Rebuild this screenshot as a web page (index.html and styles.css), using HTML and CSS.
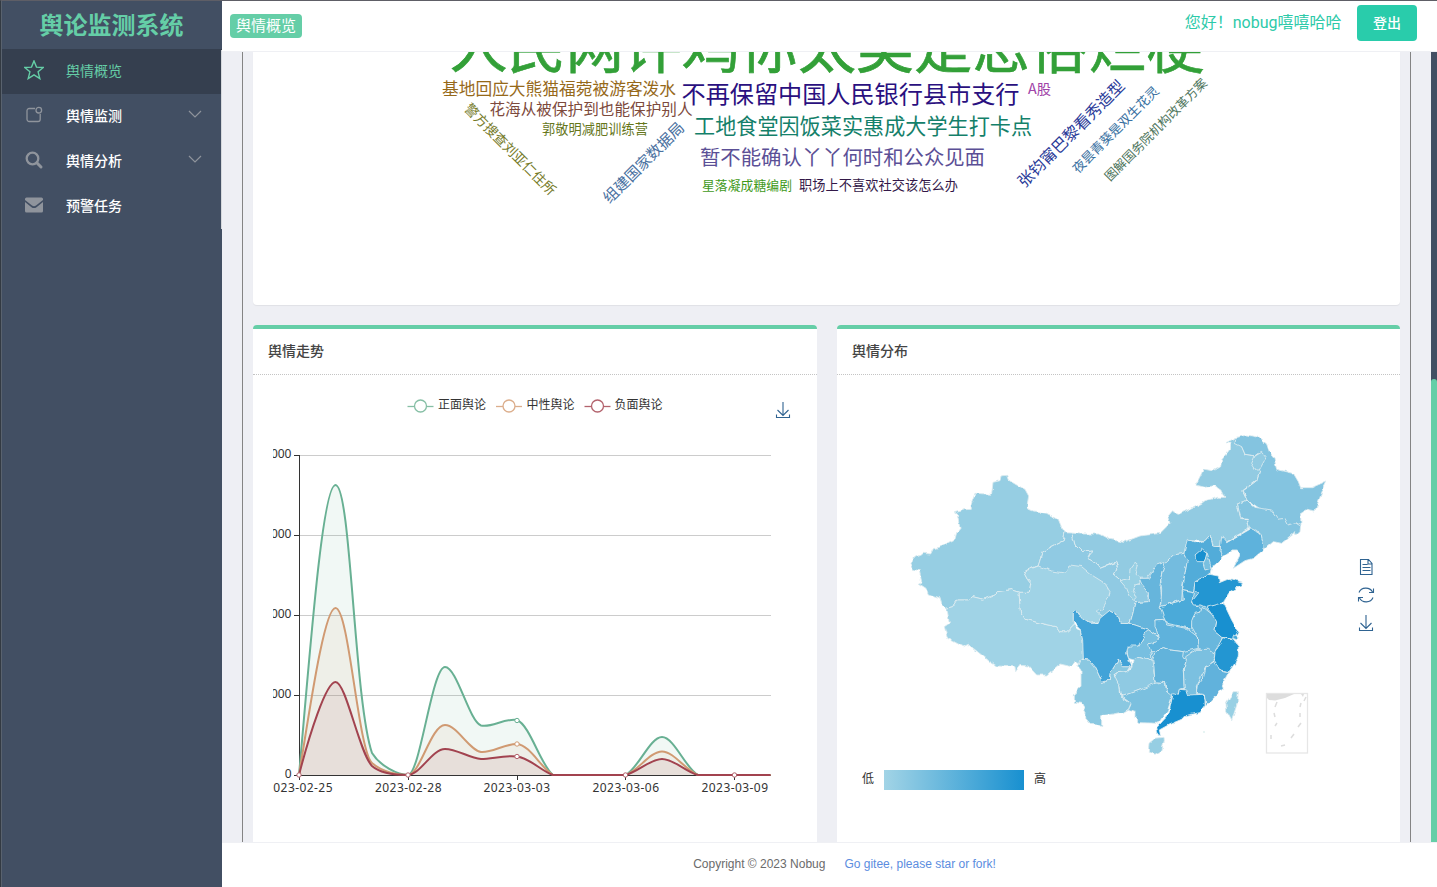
FILE: index.html
```html
<!DOCTYPE html>
<html lang="zh-CN">
<head>
<meta charset="utf-8">
<title>舆论监测系统</title>
<link rel="stylesheet" href="styles.css">
</head>
<body>
<div class="app">
  <aside class="sidebar">
    <h1 class="brand">舆论监测系统</h1>
    <nav class="menu">
      <a class="item active">
        <svg class="icon" viewBox="0 0 20 20"><path d="M10 .9l2.500 6.200 6.800.4-5.200 4.300 1.700 6.800L10 14.900l-5.800 3.700 1.700-6.800L.7 7.500l6.800-.4z" fill="none" stroke="currentColor" stroke-width="1.400"/></svg>
        <span>舆情概览</span></a>
      <a class="item">
        <svg class="icon" viewBox="0 0 20 20"><path d="M11 3.500H5.200A2.200 2.200 0 0 0 3 5.700v8.600A2.200 2.200 0 0 0 5.200 16.500H14a2.200 2.200 0 0 0 2.200-2.200V9" fill="none" stroke="currentColor" stroke-width="1.300"/><circle cx="14.800" cy="5.200" r="2.800" fill="none" stroke="currentColor" stroke-width="1.300"/></svg>
        <span>舆情监测</span>
        <svg class="arrow" viewBox="0 0 14 8"><path d="M1 1l6 6 6-6" fill="none" stroke="currentColor" stroke-width="1.200"/></svg></a>
      <a class="item">
        <svg class="icon" viewBox="0 0 20 20"><circle cx="8.500" cy="8.500" r="5.800" fill="none" stroke="currentColor" stroke-width="2.300"/><path d="M12.800 12.800l4.200 4.200" stroke="currentColor" stroke-width="3" stroke-linecap="round"/></svg>
        <span>舆情分析</span>
        <svg class="arrow" viewBox="0 0 14 8"><path d="M1 1l6 6 6-6" fill="none" stroke="currentColor" stroke-width="1.200"/></svg></a>
      <a class="item">
        <svg class="icon" viewBox="0 0 20 20"><path d="M1 4a1.500 1.500 0 0 1 1.500-1.500h15A1.500 1.500 0 0 1 19 4v1L12 10.600q-2 1.500-4 0L1 5z" fill="currentColor"/><path d="M1 7l6.500 5.200q2.500 1.800 5 0L19 7v9a1.500 1.500 0 0 1-1.500 1.500h-15A1.500 1.500 0 0 1 1 16z" fill="currentColor"/></svg>
        <span>预警任务</span></a>
    </nav>
    <div class="side-thumb"></div>
  </aside>

  <div class="page">
    <header class="topbar">
      <span class="tag">舆情概览</span>
      <span class="hello">您好！nobug嘻嘻哈哈</span>
      <button class="logout">登出</button>
    </header>

    <div class="viewport">
      <main class="content">
        <section class="card cloud">
          <svg class="cloud-svg" viewBox="253 52 1147 253">
            <text x="449.500" y="68" font-size="58" textLength="755" fill="#33a038" stroke="#33a038" stroke-width=".7">人民网评鸡你太美是恶俗烂梗</text>
            <text x="442" y="95" font-size="16.700" textLength="234" fill="#96691a">基地回应大熊猫福菀被游客泼水</text>
            <text x="681.500" y="102.500" font-size="24.200" textLength="338" fill="#2a1080">不再保留中国人民银行县市支行</text>
            <text x="1028" y="94" font-size="14" textLength="23" lengthAdjust="spacingAndGlyphs" fill="#a043a8">A股</text>
            <text x="489.500" y="115" font-size="15.600" textLength="203" fill="#7d4a3c">花海从被保护到也能保护别人</text>
            <text x="542" y="134" font-size="13.200" textLength="106" fill="#66761a">郭敬明减肥训练营</text>
            <text x="694" y="133.500" font-size="21.100" textLength="338" fill="#14806a">工地食堂因饭菜实惠成大学生打卡点</text>
            <text x="700" y="165" font-size="20.400" textLength="285" fill="#5b4f96">暂不能确认丫丫何时和公众见面</text>
            <text x="702" y="190" font-size="12.800" textLength="90" fill="#3f9a1a">星落凝成糖编剧</text>
            <text x="799" y="190" font-size="13.200" textLength="159" fill="#331848">职场上不喜欢社交该怎么办</text>
            <g class="tilted">
              <text transform="translate(511 148.500) rotate(45)" font-size="13.600" fill="#757a28">警方搜查刘亚仁住所</text>
              <text transform="translate(642.500 161.500) rotate(-45)" font-size="15.300" fill="#4a719f">组建国家数据局</text>
              <text transform="translate(1070.500 133) rotate(-45)" font-size="15.900" fill="#2a3a98">张钧甯巴黎看秀造型</text>
              <text transform="translate(1115 129) rotate(-45)" font-size="12.900" fill="#376f9f">夜昙青葵是双生花灵</text>
              <text transform="translate(1155 129) rotate(-45)" font-size="12.600" fill="#4f765d">图解国务院机构改革方案</text>
            </g>
          </svg>
        </section>

        <div class="row">
          <section class="card panel">
            <h2 class="panel-title">舆情走势</h2>
            <svg class="chart" viewBox="253 375 564 467">
              <defs><clipPath id="plot"><rect x="273" y="375" width="544" height="467"/></clipPath></defs>
              <g fill="#fff" stroke-width="1.300">
                <g stroke="#86bfa5"><path d="M407.500 406.500h26"/><circle cx="420.500" cy="406" r="6"/></g>
                <g stroke="#dcae8c"><path d="M496 406.500h26"/><circle cx="509" cy="406" r="6"/></g>
                <g stroke="#b3636d"><path d="M584.500 406.500h26"/><circle cx="597.500" cy="406" r="6"/></g>
              </g>
              <g class="label">
                <text x="438" y="409">正面舆论</text><text x="526.500" y="409">中性舆论</text><text x="614.500" y="409">负面舆论</text>
              </g>
              <path class="tool" d="M783 402v13M777.500 410l5.500 5.500 5.500-5.500M776.500 414.500v3h13v-3"/>
              <path d="M300 455.500h471M300 535.500h471M300 615.500h471M300 695.500h471" stroke="#ccc"/>
              <path d="M299.500 455v325M294 455.500h5M294 535.500h5M294 615.500h5M294 695.500h5M294 775.500h477M408.500 775v5M517.500 775v5M625.500 775v5M734.500 775v5" stroke="#333" fill="none"/>
              <g class="label" clip-path="url(#plot)">
                <g text-anchor="end"><text x="291.500" y="458">4000</text><text x="291.500" y="538">3000</text><text x="291.500" y="618">2000</text><text x="291.500" y="698">1000</text><text x="291.500" y="778">0</text></g>
                <g class="dates"><text x="266" y="792" textLength="66.500">2023-02-25</text><text x="375" y="792" textLength="66.500">2023-02-28</text><text x="483.500" y="792" textLength="66.500">2023-03-03</text><text x="592.500" y="792" textLength="66.500">2023-03-06</text><text x="701.500" y="792" textLength="66.500">2023-03-09</text></g>
              </g>
              <g class="series">
                <path fill="#68b093" stroke="#68b093" d="M299 775C309 665 322 485 335.500 485C351 485 354 700 372 753C380 766 398 775 408 775C420 775 432 667 445 667C457 667 469 721 481 725.500C492 728 504 718 517 720C530 725 541 766 553 775H625.500C638 769 650 737 662 737C674 737 686 769 698 775H770.500"/>
                <path fill="#d09a72" stroke="#d09a72" d="M299 775C309 715 324 608 335.500 608C349 608 358 750 372 763C382 772 398 775 408 775C420 775 431 725 445 725C457 725 469 750 481 752C492 753 504 744 517 744C530 745 541 768 553 775H625.500C638 771 650 751.500 662 751.500C674 751.500 686 771 698 775H770.500"/>
                <path fill="#a2434f" stroke="#a2434f" d="M299 775C309 736 326 682 335.500 682C346 682 359 752 372 766C381 774 398 775 408 775C420 775 432 749 445 749C457 749 469 758 481 759C492 759 504 755 517 756.500C530 758 541 771 553 775H625.500C638 772 650 759 662 759C674 759 686 772 698 775H770.500"/>
              </g>
              <g fill="#fff" stroke="#b3636d">
                <circle cx="299" cy="775" r="2.200"/><circle cx="408" cy="775" r="2.200"/><circle cx="625.500" cy="775" r="2.200"/><circle cx="734.500" cy="775" r="2.200"/><circle cx="517" cy="756.500" r="2.200"/>
                <circle cx="517" cy="744" r="2.200" stroke="#d09a72"/><circle cx="517" cy="720.500" r="2.200" stroke="#68b093"/>
              </g>
            </svg>
          </section>

          <section class="card panel">
            <h2 class="panel-title">舆情分布</h2>
            <svg class="chart" viewBox="837 375 563 467">
              <defs>
                <linearGradient id="scale"><stop offset="0" stop-color="#a2d4e6"/><stop offset="1" stop-color="#1890d0"/></linearGradient>
                <filter id="rough" filterUnits="userSpaceOnUse" x="0" y="0" width="1320" height="1060" color-interpolation-filters="sRGB"><feTurbulence type="fractalNoise" baseFrequency=".06" numOctaves="1" seed="4"/><feDisplacementMap in="SourceGraphic" scale="14" xChannelSelector="R" yChannelSelector="G"/></filter>
              </defs>
              <g class="map" transform="translate(900 420) scale(.33333)" filter="url(#rough)">
                <path fill="#6db9de" d="M720 440L790 425 870 380 930 380 930 560 960 680 900 800 760 800 700 690 690 560z"/>
                <path fill="#96cee3" d="M303 168L320 166 325 180 350 195 375 208 386 228 380 265 400 273 440 280 475 298 484 320 495 338 490 362 455 380 427 397 415 437 370 455 382 478 392 490 388 517 357 517 332 509 295 515 285 525 250 538 218 530 205 540 170 540 158 560 140 565 128 555 124 535 85 522 78 505 55 490 65 485 58 452 40 448 33 430 45 412 72 400 92 402 100 386 118 382 165 357 170 338 180 325 172 285 163 278 195 269 214 268 213 255 225 220 275 223 279 187 300 182z"/>
                <path fill="#92cbe2" d="M515 339L540 342 600 342 630 358 670 367 720 348 780 340 810 310 803 290 815 275 835 283 870 267 905 250 915 242 955 232 975 232 960 208 945 197 915 202 887 195 905 160 910 147 940 153 962 140 965 120 988 90 990 70 978 68 1008 53 1025 80 1035 103 1065 107 1080 150 1070 180 1028 212 1042 240 1012 252 1022 293 1042 300 1048 325 1005 350 965 375 938 378 930 345 915 362 865 358 852 400 820 405 795 430 765 440 740 475 720 475 690 478 660 482 640 465 655 440 650 427 635 430 600 445 590 430 562 415 575 390 545 395 525 375z"/>
                <path fill="#90cae3" d="M495 338L515 339 525 375 545 395 575 390 562 415 590 430 600 445 635 432 650 427 655 440 640 465 660 482 690 490 735 495 745 515 745 545 705 548 700 575 690 608 660 608 655 590 628 572 605 600 580 600 415 437 427 397 455 380 490 362z"/>
                <path fill="#98d0e4" d="M705 430L690 450 688 475 660 482 680 505 690 530 702 542 712 532 700 515 705 495 720 490 718 470 705 460 712 435z"/>
                <path fill="#a0d3e6" d="M140 565L158 560 170 540 205 540 218 530 250 538 285 525 295 515 332 509 357 517 362 580 378 598 430 612 470 620 480 635 500 635 520 615 540 630 550 660 551 712 540 735 525 725 515 740 480 732 440 765 410 765 385 738 360 736 347 755 345 740 290 738 270 725 205 673 190 680 143 655 133 620 148 610z"/>
                <path fill="#a0d3e6" d="M415 438L370 455 382 478 392 490 388 517 357 517 362 580 378 598 430 612 470 620 480 635 500 635 520 615 520 578 530 572 545 595 570 610 600 605 612 592 590 575 605 570 625 535 630 515 615 490 575 465 545 440 510 435 500 460 455 453z"/>
                <path fill="#66b5dc" d="M800 425L785 460 780 495 785 530 780 557 795 598 765 600 775 650 743 628 690 610 700 575 705 548 745 545 745 515 725 492 718 475 745 475 770 435z"/>
                <path fill="#74bcdf" d="M795 428L820 405 852 400 864 422 852 470 847 510 845 540 782 560 785 510 782 475z"/>
                <path fill="#52acd9" d="M862 355L890 368 915 362 930 345 938 375 960 380 970 410 945 435 935 440 930 463 885 490 880 518 847 512 862 420 852 400z"/>
                <path fill="#5eb2dc" d="M965 350L980 368 1060 322 1085 345 1093 388 1060 415 1035 422 1000 445 1020 405 1015 390 1000 390 970 410 960 390z"/>
                <path fill="#84c4e0" d="M1008 53L1040 45 1075 52 1100 72 1108 95 1120 110 1130 148 1180 160 1195 185 1202 203 1235 203 1280 183 1270 205 1245 273 1220 268 1202 280 1203 320 1165 325 1042 240 1030 212 1070 182 1080 150 1060 130 1075 100 1065 107 1035 103 1025 80 1005 70z"/>
                <path fill="#92cbe2" d="M1065 108L1085 97 1098 113 1078 150 1068 150 1055 130z"/>
                <path fill="#84c4e0" d="M1012 252L1040 240 1065 262 1115 270 1135 298 1155 295 1165 315 1185 308 1202 318 1200 335 1190 345 1185 335 1145 370 1120 365 1093 388 1083 340 1048 325 1042 295 1022 293z"/>
                <path fill="#4baad9" d="M780 560L850 540 847 512 880 518 875 548 895 560 905 570 880 590 875 625 800 610 790 590z"/>
                <path fill="#5fb2dc" d="M765 600L790 598 800 615 860 625 892 650 895 685 850 695 810 690 790 683 765 695 745 695 745 675 775 655 770 630 765 620z"/>
                <path fill="#69b7dd" d="M910 562L920 570 945 590 950 605 945 635 967 652 960 675 940 698 910 690 895 685 892 650 875 620 875 602 885 580 905 575z"/>
                <path fill="#1890d0" d="M920 562L960 548 975 558 995 600 1015 635 1010 645 1000 658 965 652 945 635 950 605 930 575z"/>
                <path fill="#2396d2" d="M930 463L955 468 958 488 990 475 1028 487 1023 495 990 515 965 550 920 562 905 555 880 555 875 545 895 520 882 510 885 485z"/>
                <path fill="#1890d0" d="M905 388L920 400 915 425 895 425 885 405z"/>
                <path fill="#79c0e0" d="M922 403L930 430 933 445 915 450 910 430z"/>
                <path fill="#78bfe0" d="M743 628L775 650 772 665 745 672 755 705 755 720 735 715 720 710 700 720 685 715 680 690 690 675 715 678z"/>
                <path fill="#8ac8e1" d="M540 720L568 720 585 740 607 787 628 780 630 760 655 720 670 740 690 740 680 755 645 760 660 800 662 830 693 850 690 865 670 877 640 882 605 887 605 920 590 912 570 910 557 895 558 875 545 850 523 847 523 825 543 795 543 750 533 738z"/>
                <path fill="#42a3d8" d="M520 578L530 572 545 595 570 610 595 610 600 595 628 572 655 588 660 608 690 610 743 628 715 678 685 678 680 700 695 740 670 740 655 720 630 760 628 780 607 787 585 740 568 720 550 718 548 660 540 625 520 605z"/>
                <path fill="#8fcae3" d="M720 710L755 720 763 765 765 790 745 805 720 810 690 822 665 830 660 800 645 770 650 758 680 755 695 740 700 720z"/>
                <path fill="#7bc0df" d="M665 830L720 810 765 790 795 785 800 815 820 820 803 870 775 910 720 908 705 895 705 875 685 868 693 850z"/>
                <path fill="#62b3db" d="M765 695L790 683 810 690 850 695 848 710 858 725 850 750 853 805 838 808 835 823 815 825 802 815 798 788 765 785 762 740 758 720z"/>
                <path fill="#7bc0e0" d="M857 710L890 688 925 688 945 700 942 720 918 740 905 765 892 800 895 830 865 830 853 805 850 750 858 725z"/>
                <path fill="#61b2dc" d="M945 723L960 750 987 755 965 795 970 805 918 858 913 825 892 820 895 795 910 775 918 740z"/>
                <path fill="#2396d2" d="M968 653L1000 660 1015 680 1015 705 1005 730 987 755 960 750 942 723 945 695z"/>
                <path fill="#48a8d8" d="M1000 645L1017 655 1010 662 998 658z"/>
                <path fill="#1890d0" d="M820 818L835 823 838 808 860 810 865 825 910 823 915 840 915 858 900 878 855 887 845 898 805 915 778 930 782 947 770 942 768 925 805 885z"/>
                <path fill="#96cee3" d="M792 952L765 955 747 970 745 995 765 1003 785 992 793 965z"/>
                <path fill="#98d0e4" d="M1000 815L1015 815 1012 850 995 902 980 875 978 850z"/>
              </g>
              <g fill="none" stroke="#e6e6e6">
                <rect x="1266.500" y="693.500" width="41" height="59.500" stroke-width="1.300"/>
                <path fill="#ddd" stroke="none" d="M1267 694h27l-9 4-10 2.500-6-.5-2-2zM1301 694h3l-1 3z"/>
                <path stroke="#ddd" stroke-width="1.500" d="M1277 702l-2 5M1274 713l1 4M1277 723l-2 3M1271 735v4M1281 746l4-1M1291 738l3-4M1298 727l3-4M1300 713v4M1301 703l-1 4M1306 697l-2 4"/>
              </g>
              <circle cx="1204" cy="732" r=".8" fill="#c9e5e4"/>
              <g class="tool">
                <path d="M1360.500 559.500h8l3.500 4v11h-11.500zM1368 559.500v4.500h4M1362.500 564.500h5M1362.500 567.500h8M1362.500 570.500h8"/>
                <path d="M1359 592.500a7.300 6.600 0 0 1 13.500-.5M1373 597.500a7.300 6.600 0 0 1-13.500.5M1373.500 588.500v4h-4.500M1358.500 601.500v-4h4.500"/>
                <path d="M1366 615v13M1360.500 623l5.500 5.500 5.500-5.500M1359.500 627.500v3h13v-3"/>
              </g>
              <rect x="884" y="770" width="140" height="20" fill="url(#scale)"/>
              <g class="label"><text x="862" y="783">低</text><text x="1034" y="783">高</text></g>
            </svg>
          </section>
        </div>
      </main>
      <div class="scrollbar"><div class="thumb"></div></div>
    </div>

    <footer class="footer"><span>Copyright © 2023 Nobug</span><a>Go gitee, please star or fork!</a></footer>
  </div>
</div>
</body>
</html>
```
FILE: styles.css
```css
* { box-sizing: border-box; }
body {
  margin: 0;
  font-family: "Noto Sans", "Noto Sans CJK SC", sans-serif;
  background: #fff;
  overflow: hidden;
}
.app {
  display: flex;
  width: 1437px;
  height: 887px;
  border-top: 1px solid #5e5e66;
  border-left: 1px solid #333a42;
}
.sidebar {
  position: relative;
  width: 221px;
  flex: none;
  background: #424f63;
  border-left: 1px solid #59626e;
}
.brand {
  margin: 0;
  height: 48px;
  padding-right: 1px;
  font: 700 24px/45px "Noto Sans CJK SC", sans-serif;
  text-align: center;
  color: #65cea7;
}
.item {
  display: flex;
  align-items: center;
  height: 45px;
  padding: 0 20px 0 22px;
  color: #fff;
  font: 500 14px/43px "Noto Sans CJK SC", sans-serif;
}
.item span { height: 45px; }
.item.active { background: #353f4f; color: #65cea7; font-weight: 400; }
.icon { width: 20px; height: 20px; margin: -4px 22px 0 0; color: #8f949c; }
.active .icon { color: #65cea7; }
.arrow { width: 14px; height: 8px; margin: -5px 0 0 auto; color: #8f949c; }
.side-thumb {
  position: absolute;
  top: 49px;
  right: 0;
  width: 1px;
  height: 179px;
  background: #d5d8dc;
}
.page { display: flex; flex-direction: column; flex: 1; min-width: 0; }
.topbar {
  display: flex;
  align-items: center;
  height: 51px;
  flex: none;
  padding: 0 20px 6px 8px;
  border-bottom: 1px solid #eff0f4;
  background: #fff;
}
.tag {
  height: 24px;
  margin-top: 6px;
  padding: 0 6px;
  border-radius: 4px;
  background: #65cea7;
  color: #fff;
  font: 400 15px/22px "Noto Sans CJK SC", sans-serif;
}
.hello {
  margin-left: auto;
  margin-right: 15.500px;
  color: #2dcaa9;
  font: 16px/24px Roboto, "Noto Sans CJK SC", sans-serif;
}
.logout {
  width: 60px;
  height: 36px;
  padding: 0 0 2px;
  border: 0;
  border-radius: 4px;
  background: #29ccab;
  color: #fff;
  font: 500 14px/34px "Noto Sans CJK SC", sans-serif;
}
.viewport { display: flex; height: 790px; flex: none; overflow: hidden; background: #eeeff4; }
.content {
  flex: 1;
  min-width: 0;
  margin: 0 20px;
  padding: 0 10px;
  border-left: 1px solid #848484;
  border-right: 1px solid #848484;
}
.card { background: #fff; overflow: hidden; }
.cloud { height: 253px; border-radius: 0 0 4px 4px; box-shadow: 0 1px 1px rgba(0, 0, 0, .06); }
.cloud-svg { display: block; width: 1147px; height: 253px; font-family: "Noto Sans CJK SC", sans-serif; }
.tilted text { text-anchor: middle; dominant-baseline: central; }
.row { display: grid; grid-template-columns: 564px 563px; gap: 20px; margin-top: 20px; }
.panel { border-top: 4px solid #65cea7; border-radius: 4px 4px 0 0; }
.panel-title {
  height: 46px;
  margin: 0;
  padding-left: 15px;
  border-bottom: 1px dotted #c4c4c4;
  color: #444;
  font: 500 14px/42px "Noto Sans CJK SC", sans-serif;
}
.chart { display: block; width: 100%; height: 467px; }
.label { fill: #333; font-size: 12px; font-family: "Noto Sans", "Noto Sans CJK SC", sans-serif; }
.series path { stroke-width: 2; fill-opacity: .09; stroke-linejoin: round; }
.map path { stroke: #dcebf0; stroke-width: 2.6; stroke-linejoin: round; }
.tool { fill: none; stroke: #2f6391; stroke-width: 1.1; }
.scrollbar { width: 6px; flex: none; background: #424f63; }
.thumb { height: 463px; margin-top: 327px; border-radius: 3px 3px 0 0; background: #65cea7; }
.footer {
  display: flex;
  align-items: center;
  justify-content: center;
  gap: 19px;
  flex: 1;
  padding: 0 0 2px 30px;
  border-top: 1px solid #eff0f4;
  color: #6b6b6b;
  font: 12px "Liberation Sans", sans-serif;
}
.footer a { color: #5b8de0; }
```
